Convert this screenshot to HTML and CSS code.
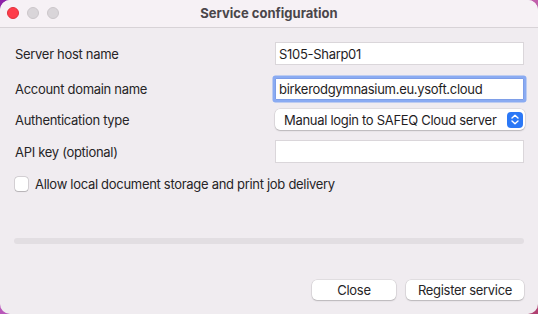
FILE: index.html
```html
<!DOCTYPE html>
<html>
<head>
<meta charset="utf-8">
<link rel="stylesheet" href="styles.css">
</head>
<body>
<div class="window">
  <div class="titlebar">
    <div class="lights">
      <span class="light red"></span>
      <span class="light grey"></span>
      <span class="light grey"></span>
    </div>
    <div class="title">Service configuration</div>
  </div>
  <div class="content">
    <div class="row r1">
      <label class="label">Server host name</label>
      <div class="field">S105-Sharp01</div>
    </div>
    <div class="row r2">
      <label class="label">Account domain name</label>
      <div class="field focused">birkerodgymnasium.eu.ysoft.cloud</div>
    </div>
    <div class="row r3">
      <label class="label">Authentication type</label>
      <div class="popup">
        <span class="popup-text">Manual login to SAFEQ Cloud server</span>
        <span class="stepper">
          <svg width="16" height="15" viewBox="0 0 16 15">
            <path d="M5 6 L8 3.2 L11 6" fill="none" stroke="#fff" stroke-width="1.4" stroke-linecap="round" stroke-linejoin="round"/>
            <path d="M5 9 L8 11.8 L11 9" fill="none" stroke="#fff" stroke-width="1.4" stroke-linecap="round" stroke-linejoin="round"/>
          </svg>
        </span>
      </div>
    </div>
    <div class="row r4">
      <label class="label">API key (optional)</label>
      <div class="field"></div>
    </div>
    <div class="check-row">
      <span class="checkbox"></span>
      <span class="check-label">Allow local document storage and print job delivery</span>
    </div>
    <div class="progress"></div>
    <div class="buttons">
      <button class="btn close">Close</button>
      <button class="btn register">Register service</button>
    </div>
  </div>
</div>
</body>
</html>
```

FILE: styles.css
```css
* { box-sizing: border-box; }
html, body { margin: 0; padding: 0; }
body {
  width: 538px;
  height: 314px;
  overflow: hidden;
  background:
    linear-gradient(135deg, #8d22a8 0%, #c86ac0 50%, #b04070 100%);
  font-family: Inter, "Noto Sans", sans-serif;
  font-size: 13px;
  letter-spacing: -0.3px;
  color: #262426;
}
.window {
  width: 538px;
  height: 314px;
  border-radius: 10px;
  background: #f0ecf0;
  overflow: hidden;
  display: flex;
  flex-direction: column;
}
.titlebar {
  height: 28px;
  flex: none;
  background: #f6f1f5;
  border-bottom: 1px solid #d8d3d7;
  position: relative;
  display: flex;
  align-items: center;
  justify-content: center;
}
.lights {
  position: absolute;
  left: 7px;
  top: 7px;
  display: flex;
  gap: 8px;
}
.light {
  width: 12px;
  height: 12px;
  border-radius: 50%;
  display: block;
}
.red { background: #fe3d4a; border: 0.5px solid #e0303c; }
.grey { background: #d9d5d9; border: 0.5px solid #cbc6ca; }
.title {
  font-weight: 700;
  font-size: 13px;
  letter-spacing: 0;
  color: #4a464a;
  margin-top: -1px;
}
.content {
  flex: 1;
  padding: 14px 14px 0 15px;
  display: flex;
  flex-direction: column;
}
.row {
  display: flex;
  justify-content: space-between;
  align-items: flex-start;
}
.r1 { height: 36px; }
.r2 { height: 31px; }
.r3 { height: 31px; }
.r4 { height: 23px; }
.label {
  line-height: 24px;
}
.r2 .label { line-height: 23px; }
.r3 .label { line-height: 22px; }
.field {
  width: 249px;
  height: 23px;
  background: #fff;
  border: 1px solid #dad6da;
  padding: 0 0 0 3px;
  line-height: 22px;
  color: #1f1d1f;
}
.field.focused {
  height: 22px;
  line-height: 21px;
  border-color: #7e9ee8;
  box-shadow: 0 0 0 2.5px #8aabf2;
  border-radius: 1px;
}
.popup {
  width: 250px;
  height: 21px;
  margin-right: -1px;
  background: #fff;
  border-radius: 5px;
  box-shadow: 0 0 0 0.5px rgba(0,0,0,0.12), 0 1px 1.5px rgba(0,0,0,0.18);
  display: flex;
  align-items: center;
  justify-content: space-between;
  padding: 0 2px 0 9px;
}
.popup-text { color: #1f1d1f; }
.stepper {
  width: 16px;
  height: 16px;
  border-radius: 4px;
  background: #2b78f6;
  display: flex;
  align-items: center;
  justify-content: center;
}
.stepper svg { display: block; }
.check-row {
  margin-top: 13px;
  display: flex;
  align-items: center;
  gap: 7px;
}
.checkbox {
  width: 13px;
  height: 14px;
  border-radius: 3px;
  background: #fff;
  box-shadow: 0 0 0 0.5px rgba(0,0,0,0.22), 0 0.5px 1px rgba(0,0,0,0.15);
  display: block;
}
.progress {
  margin-top: 46px;
  margin-left: -1px;
  height: 6px;
  border-radius: 3px;
  background: #e2dee2;
}
.buttons {
  margin-top: 36px;
  display: flex;
  justify-content: flex-end;
  gap: 10px;
}
.btn {
  height: 20px;
  font-family: Inter, "Noto Sans", sans-serif;
  font-size: 13px;
  letter-spacing: -0.3px;
  color: #262426;
  background: #fff;
  border: none;
  border-radius: 5px;
  box-shadow: 0 0 0 0.5px rgba(0,0,0,0.12), 0 1px 1.5px rgba(0,0,0,0.18);
  padding: 0;
  line-height: 20px;
}
.close { width: 84px; }
.register { width: 118px; }
```
